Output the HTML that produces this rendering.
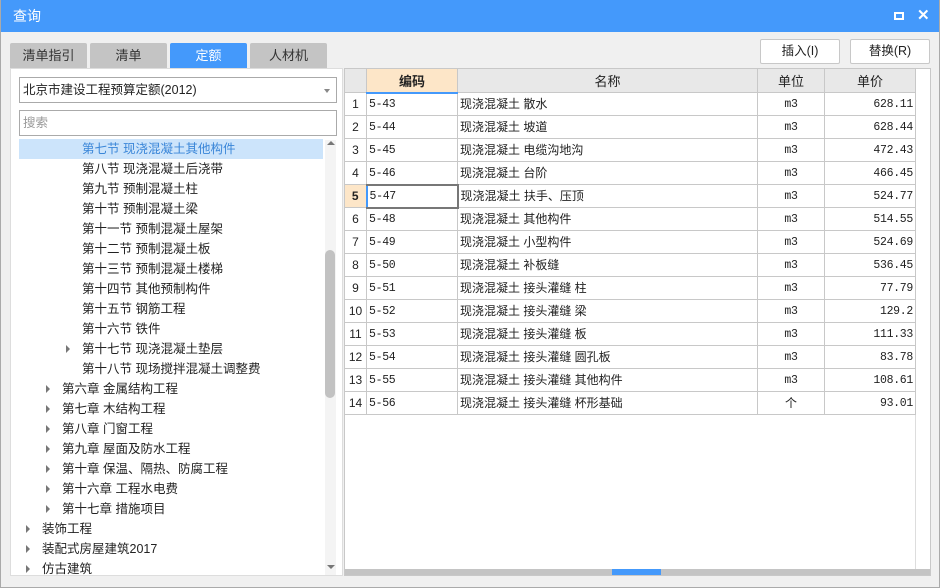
<!DOCTYPE html>
<html><head><meta charset="utf-8"><style>
*{margin:0;padding:0;box-sizing:border-box}
body{width:940px;height:588px;background:#f0f0f0;font-family:"Liberation Sans","Noto Sans CJK SC",sans-serif;font-size:12px;color:#222;position:relative;overflow:hidden}
.abs{position:absolute}
.title{left:0;top:0;width:940px;height:32px;background:#4499fb;color:#fff;font-size:14px;line-height:33px;padding-left:13px}
.tab{top:43px;height:25px;width:77px;background:#c4c4c4;text-align:center;line-height:26px;font-size:13px;border-radius:2px 2px 0 0;color:#333}
.tab.on{background:#4499fb;color:#fff}
.btn{top:39px;height:25px;background:#fff;border:1px solid #c8c8c8;border-radius:2px;text-align:center;line-height:23px;font-size:12.5px}
.left{left:10px;top:68px;width:333px;height:508px;background:#fff;border:1px solid #ddd}
.inp{left:19px;width:318px;height:26px;border:1px solid #aaa;background:#fff;line-height:24px;padding-left:3px;font-size:12.5px}
.tr{left:0;height:20px;line-height:20px;font-size:12.5px;white-space:nowrap}
.ar{width:0;height:0;border-left:4px solid #777;border-top:4px solid transparent;border-bottom:4px solid transparent;position:absolute;top:6px}
table{position:absolute;left:344px;top:68px;border-collapse:collapse;background:#fff;table-layout:fixed}
tr{height:23px}
td{border:1px solid #c8c8c8;height:23px;font-size:12px;padding:0 2px;white-space:nowrap;overflow:hidden;line-height:18px;vertical-align:middle}
td.m{font-family:"Liberation Mono",monospace;font-size:11.5px;letter-spacing:-0.3px;padding-top:2px}
th{border:1px solid #c8c8c8;height:24px;background:#e8e8e8;font-weight:normal;font-size:13px}
</style></head><body>
<div class="abs title">查询</div>
<div class="abs" style="left:894px;top:12px;width:10px;height:8px;border:2px solid #fff"></div>
<div class="abs" style="left:917px;top:6px;color:#fff;font-size:15px;font-weight:bold;line-height:20px">✕</div>
<div class="abs tab" style="left:10px">清单指引</div>
<div class="abs tab" style="left:90px">清单</div>
<div class="abs tab on" style="left:170px">定额</div>
<div class="abs tab" style="left:250px">人材机</div>
<div class="abs btn" style="left:760px;width:80px">插入(I)</div>
<div class="abs btn" style="left:850px;width:80px">替换(R)</div>
<div class="abs left"></div>
<div class="abs inp" style="top:77px">北京市建设工程预算定额(2012)<span style="position:absolute;right:6px;top:11px;border-top:4px solid #888;border-left:3px solid transparent;border-right:3px solid transparent"></span></div>
<div class="abs inp" style="top:110px;color:#999">搜索</div>
<div class="abs" style="left:19px;top:139px;width:304px;height:20px;background:#cce4fb"></div>
<div class="abs" style="left:325px;top:140px;width:11px;height:435px;background:#f4f4f4"></div>
<div class="abs" style="left:327px;top:141px;border-bottom:4px solid #777;border-left:4px solid transparent;border-right:4px solid transparent"></div>
<div class="abs" style="left:327px;top:565px;border-top:4px solid #777;border-left:4px solid transparent;border-right:4px solid transparent"></div>
<div class="abs" style="left:325px;top:250px;width:10px;height:148px;background:#c2c2c2;border-radius:5px"></div>
<div class="abs" style="left:0;top:139px;width:323px;height:437px;overflow:hidden">
<div class="tr abs" style="top:0;left:82px;color:#3a86d8">第七节 现浇混凝土其他构件</div>
<div class="tr abs" style="top:20px;left:82px">第八节 现浇混凝土后浇带</div>
<div class="tr abs" style="top:40px;left:82px">第九节 预制混凝土柱</div>
<div class="tr abs" style="top:60px;left:82px">第十节 预制混凝土梁</div>
<div class="tr abs" style="top:80px;left:82px">第十一节 预制混凝土屋架</div>
<div class="tr abs" style="top:100px;left:82px">第十二节 预制混凝土板</div>
<div class="tr abs" style="top:120px;left:82px">第十三节 预制混凝土楼梯</div>
<div class="tr abs" style="top:140px;left:82px">第十四节 其他预制构件</div>
<div class="tr abs" style="top:160px;left:82px">第十五节 钢筋工程</div>
<div class="tr abs" style="top:180px;left:82px">第十六节 铁件</div>
<div class="ar" style="left:66px;top:206px"></div><div class="tr abs" style="top:200px;left:82px">第十七节 现浇混凝土垫层</div>
<div class="tr abs" style="top:220px;left:82px">第十八节 现场搅拌混凝土调整费</div>
<div class="ar" style="left:46px;top:246px"></div><div class="tr abs" style="top:240px;left:62px">第六章 金属结构工程</div>
<div class="ar" style="left:46px;top:266px"></div><div class="tr abs" style="top:260px;left:62px">第七章 木结构工程</div>
<div class="ar" style="left:46px;top:286px"></div><div class="tr abs" style="top:280px;left:62px">第八章 门窗工程</div>
<div class="ar" style="left:46px;top:306px"></div><div class="tr abs" style="top:300px;left:62px">第九章 屋面及防水工程</div>
<div class="ar" style="left:46px;top:326px"></div><div class="tr abs" style="top:320px;left:62px">第十章 保温、隔热、防腐工程</div>
<div class="ar" style="left:46px;top:346px"></div><div class="tr abs" style="top:340px;left:62px">第十六章 工程水电费</div>
<div class="ar" style="left:46px;top:366px"></div><div class="tr abs" style="top:360px;left:62px">第十七章 措施项目</div>
<div class="ar" style="left:26px;top:386px"></div><div class="tr abs" style="top:380px;left:42px">装饰工程</div>
<div class="ar" style="left:26px;top:406px"></div><div class="tr abs" style="top:400px;left:42px">装配式房屋建筑2017</div>
<div class="ar" style="left:26px;top:426px"></div><div class="tr abs" style="top:420px;left:42px">仿古建筑</div>
</div>
<div class="abs" style="left:344px;top:68px;width:587px;height:508px;background:#fff;border:1px solid #c8c8c8"></div>
<div class="abs" style="left:915px;top:69px;width:15px;height:500px;background:#fff;border-left:1px solid #ddd"></div>
<table>
<colgroup><col style="width:22px"><col style="width:91px"><col style="width:300px"><col style="width:67px"><col style="width:91px"></colgroup>
<tr style="height:24px"><th></th><th style="background:#fde6c8;font-weight:bold;border-bottom:2px solid #4499fb">编码</th><th>名称</th><th>单位</th><th>单价</th></tr>
<tr><td style="text-align:center">1</td><td class="m">5-43</td><td>现浇混凝土 散水</td><td class="m" style="text-align:center">m3</td><td class="m" style="text-align:right">628.11</td></tr>
<tr><td style="text-align:center">2</td><td class="m">5-44</td><td>现浇混凝土 坡道</td><td class="m" style="text-align:center">m3</td><td class="m" style="text-align:right">628.44</td></tr>
<tr><td style="text-align:center">3</td><td class="m">5-45</td><td>现浇混凝土 电缆沟地沟</td><td class="m" style="text-align:center">m3</td><td class="m" style="text-align:right">472.43</td></tr>
<tr><td style="text-align:center">4</td><td class="m">5-46</td><td>现浇混凝土 台阶</td><td class="m" style="text-align:center">m3</td><td class="m" style="text-align:right">466.45</td></tr>
<tr><td style="text-align:center;background:#fde6c8;font-weight:bold">5</td><td class="m" style="border:2px solid #777;border-left:2px solid #4499fb">5-47</td><td>现浇混凝土 扶手、压顶</td><td class="m" style="text-align:center">m3</td><td class="m" style="text-align:right">524.77</td></tr>
<tr><td style="text-align:center">6</td><td class="m">5-48</td><td>现浇混凝土 其他构件</td><td class="m" style="text-align:center">m3</td><td class="m" style="text-align:right">514.55</td></tr>
<tr><td style="text-align:center">7</td><td class="m">5-49</td><td>现浇混凝土 小型构件</td><td class="m" style="text-align:center">m3</td><td class="m" style="text-align:right">524.69</td></tr>
<tr><td style="text-align:center">8</td><td class="m">5-50</td><td>现浇混凝土 补板缝</td><td class="m" style="text-align:center">m3</td><td class="m" style="text-align:right">536.45</td></tr>
<tr><td style="text-align:center">9</td><td class="m">5-51</td><td>现浇混凝土 接头灌缝 柱</td><td class="m" style="text-align:center">m3</td><td class="m" style="text-align:right">77.79</td></tr>
<tr><td style="text-align:center">10</td><td class="m">5-52</td><td>现浇混凝土 接头灌缝 梁</td><td class="m" style="text-align:center">m3</td><td class="m" style="text-align:right">129.2</td></tr>
<tr><td style="text-align:center">11</td><td class="m">5-53</td><td>现浇混凝土 接头灌缝 板</td><td class="m" style="text-align:center">m3</td><td class="m" style="text-align:right">111.33</td></tr>
<tr><td style="text-align:center">12</td><td class="m">5-54</td><td>现浇混凝土 接头灌缝 圆孔板</td><td class="m" style="text-align:center">m3</td><td class="m" style="text-align:right">83.78</td></tr>
<tr><td style="text-align:center">13</td><td class="m">5-55</td><td>现浇混凝土 接头灌缝 其他构件</td><td class="m" style="text-align:center">m3</td><td class="m" style="text-align:right">108.61</td></tr>
<tr><td style="text-align:center">14</td><td class="m">5-56</td><td>现浇混凝土 接头灌缝 杯形基础</td><td style="text-align:center">个</td><td class="m" style="text-align:right">93.01</td></tr>
</table>
<div class="abs" style="left:345px;top:569px;width:585px;height:6px;background:#c4c4c4"></div>
<div class="abs" style="left:612px;top:569px;width:49px;height:6px;background:#4499fb"></div>
<div class="abs" style="left:0;top:0;width:940px;height:588px;border:1px solid #aaa;border-top:none;pointer-events:none"></div>
</body></html>
